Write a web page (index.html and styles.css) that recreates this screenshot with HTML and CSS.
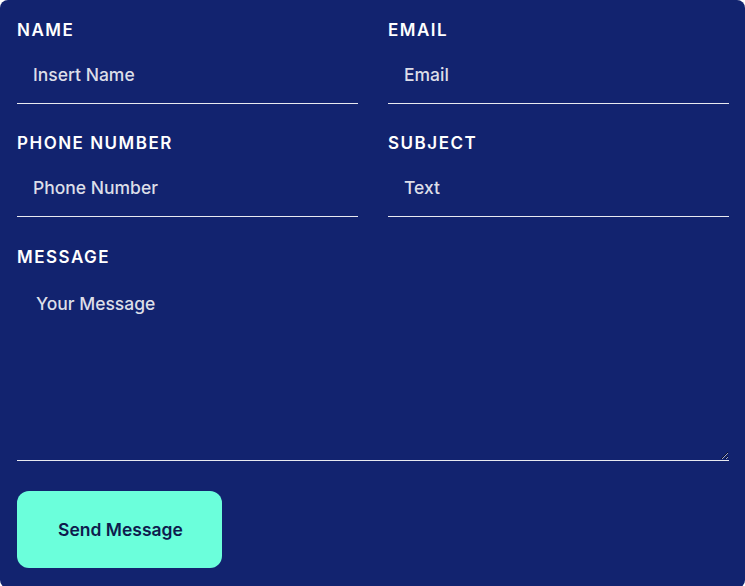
FILE: index.html
```html
<!DOCTYPE html>
<html lang="en">
<head>
<meta charset="utf-8">
<title>Contact form</title>
<link rel="stylesheet" href="styles.css">
</head>
<body>
<form class="contact">
  <div class="grid">
    <div class="field">
      <label class="label" for="name">NAME</label>
      <input class="input" id="name" type="text" placeholder="Insert Name">
    </div>
    <div class="field">
      <label class="label" for="email">EMAIL</label>
      <input class="input" id="email" type="text" placeholder="Email">
    </div>
    <div class="field">
      <label class="label" for="phone">PHONE NUMBER</label>
      <input class="input" id="phone" type="text" placeholder="Phone Number">
    </div>
    <div class="field">
      <label class="label" for="subject">SUBJECT</label>
      <input class="input" id="subject" type="text" placeholder="Text">
    </div>
    <div class="field wide">
      <label class="label" for="message">MESSAGE</label>
      <textarea class="textarea" id="message" placeholder="Your Message"></textarea>
    </div>
  </div>
  <button class="send" type="button">Send Message</button>
</form>
</body>
</html>
```
FILE: styles.css
```css
* { box-sizing: border-box; }
html, body { margin: 0; padding: 0; background: #ffffff; }
body { font-family: Inter, "Noto Sans", sans-serif; }
.contact {
  width: 745px;
  height: 588px;
  background: #12236f;
  border-radius: 8px;
  padding: 19px 16px 0 17px;
}
.grid {
  display: grid;
  grid-template-columns: 1fr 1fr;
  column-gap: 30px;
  row-gap: 28px;
}
.field { display: flex; flex-direction: column; }
.wide { grid-column: 1 / span 2; margin-top: 1px; }
.label {
  font-size: 17px;
  line-height: 22px;
  font-weight: 600;
  letter-spacing: 1.5px;
  color: #ffffff;
}
.input, .textarea {
  font-family: Inter, "Noto Sans", sans-serif;
  font-size: 17.5px;
  line-height: 24px;
  font-weight: 500;
  color: #ffffff;
  background: transparent;
  border: none;
  border-bottom: 1px solid #e8e9f0;
  outline: none;
  margin: 0;
  width: 100%;
}
.input { padding: 21px 16px 17px 16px; height: 63px; }
.textarea { padding: 24px 19px 10px 19px; height: 193px; resize: vertical; display: block; }
.input::placeholder, .textarea::placeholder { color: #dcdee8; opacity: 1; }
.send {
  margin-top: 30px;
  width: 205px;
  height: 77px;
  border: none;
  border-radius: 12px;
  background: #6bffdb;
  color: #0e1b4d;
  font-family: Inter, "Noto Sans", sans-serif;
  font-size: 17.5px;
  font-weight: 600;
  padding: 0 0 0 2px;
  cursor: pointer;
}
```
